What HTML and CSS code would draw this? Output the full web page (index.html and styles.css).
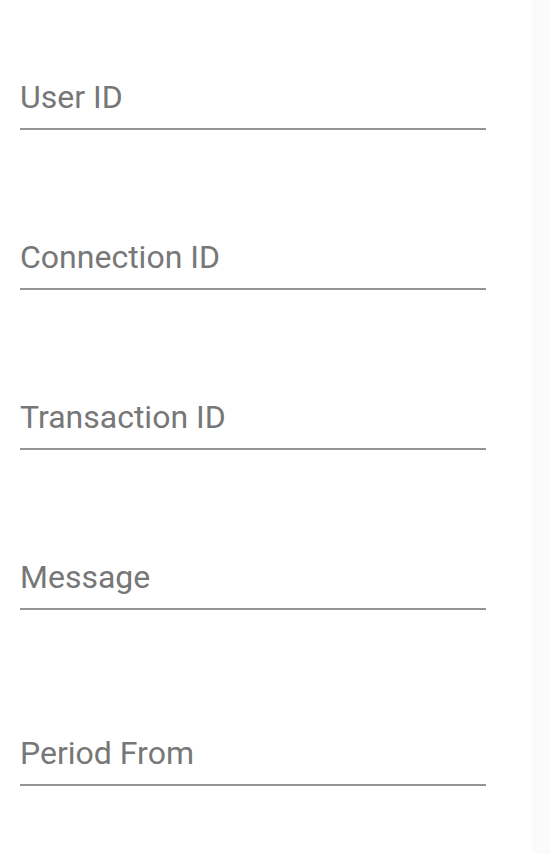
FILE: index.html
```html
<!DOCTYPE html>
<html lang="en">
<head>
<meta charset="utf-8">
<title>Search</title>
<link rel="stylesheet" href="styles.css">
</head>
<body>
<div class="layout">
  <form class="form">
    <div class="field"><label class="label">User ID</label></div>
    <div class="field"><label class="label">Connection ID</label></div>
    <div class="field"><label class="label">Transaction ID</label></div>
    <div class="field"><label class="label">Message</label></div>
    <div class="field field--date"><label class="label">Period From</label></div>
  </form>
  <aside class="side"></aside>
</div>
</body>
</html>
```
FILE: styles.css
```css
html, body {
  margin: 0;
  padding: 0;
  background: #ffffff;
}
body {
  font-family: Roboto, "Liberation Sans", Arial, sans-serif;
}
.layout {
  display: flex;
  width: 550px;
  min-height: 854px;
}
.form {
  flex: 0 0 532px;
  display: flex;
  flex-direction: column;
  gap: 30px;
  padding-left: 20px;
  box-sizing: border-box;
}
.field {
  width: 466px;
  padding-top: 79px;
  padding-bottom: 13px;
  border-bottom: 2px solid #949494;
}
.field--date {
  padding-top: 95px;
}
.label {
  display: block;
  font-size: 32px;
  line-height: 36px;
  color: #777777;
}
.side {
  flex: 1;
  background: #fbfbfb;
}
```
